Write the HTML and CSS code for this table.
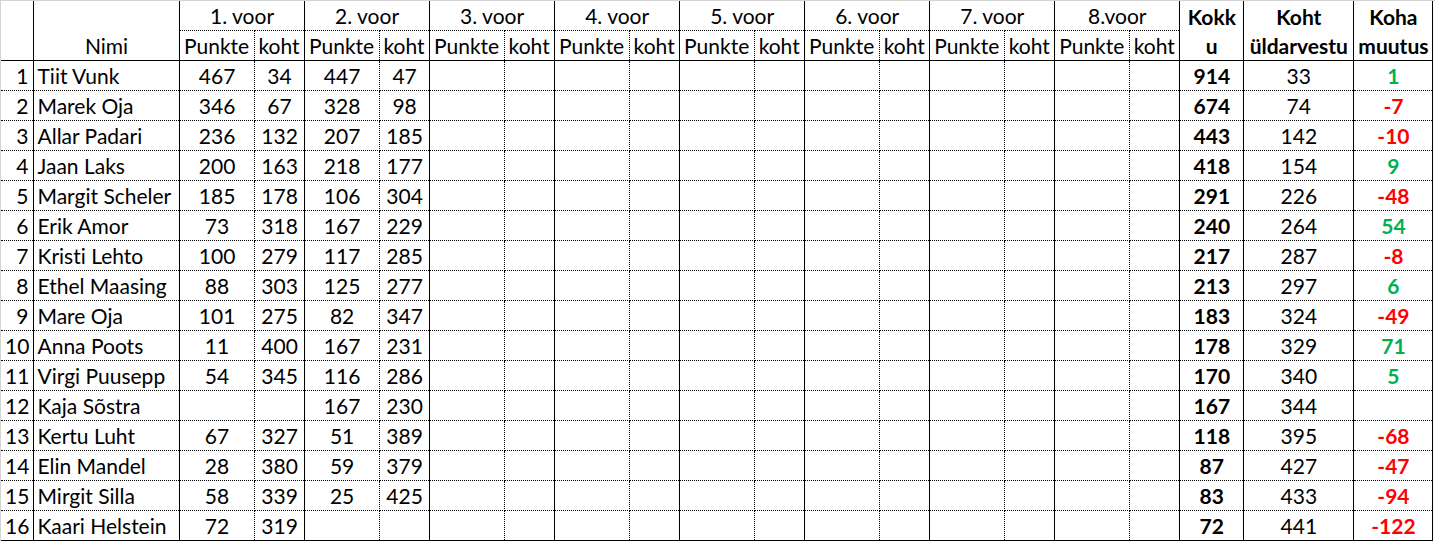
FILE: index.html
```html
<!DOCTYPE html>
<html lang="et">
<head>
<meta charset="utf-8">
<title>Tulemused</title>
<link rel="stylesheet" href="styles.css">
</head>
<body>
<div class="sheet">
<table class="results">
<colgroup>
<col class="c-nr"><col class="c-name">
<col class="c-p"><col class="c-k"><col class="c-p"><col class="c-k">
<col class="c-p"><col class="c-k"><col class="c-p"><col class="c-k">
<col class="c-p"><col class="c-k"><col class="c-p"><col class="c-k">
<col class="c-p"><col class="c-k"><col class="c-p"><col class="c-k">
<col class="c-sum"><col class="c-place"><col class="c-diff">
</colgroup>
<thead>
<tr class="top">
<th class="nr hb" rowspan="2"></th>
<th class="name hb" rowspan="2">Nimi</th>
<th class="voor" colspan="2">1. voor</th>
<th class="voor" colspan="2">2. voor</th>
<th class="voor" colspan="2">3. voor</th>
<th class="voor" colspan="2">4. voor</th>
<th class="voor" colspan="2">5. voor</th>
<th class="voor" colspan="2">6. voor</th>
<th class="voor" colspan="2">7. voor</th>
<th class="voor" colspan="2">8.voor</th>
<th class="bold hb" rowspan="2">Kokk<br>u</th>
<th class="bold hb" rowspan="2">Koht<br>üldarvestu</th>
<th class="bold hb" rowspan="2">Koha<br>muutus</th>
</tr>
<tr>
<th class="p hb">Punkte</th><th class="k hb">koht</th>
<th class="p hb">Punkte</th><th class="k hb">koht</th>
<th class="p hb">Punkte</th><th class="k hb">koht</th>
<th class="p hb">Punkte</th><th class="k hb">koht</th>
<th class="p hb">Punkte</th><th class="k hb">koht</th>
<th class="p hb">Punkte</th><th class="k hb">koht</th>
<th class="p hb">Punkte</th><th class="k hb">koht</th>
<th class="p hb">Punkte</th><th class="k hb">koht</th>
</tr>
</thead>
<tbody id="rows"></tbody>
</table>
</div>
<script src="app.js"></script>
</body>
</html>
```
FILE: app.js
```js
const data = [
  [1, "Tiit Vunk", 467, 34, 447, 47, 914, 33, 1],
  [2, "Marek Oja", 346, 67, 328, 98, 674, 74, -7],
  [3, "Allar Padari", 236, 132, 207, 185, 443, 142, -10],
  [4, "Jaan Laks", 200, 163, 218, 177, 418, 154, 9],
  [5, "Margit Scheler", 185, 178, 106, 304, 291, 226, -48],
  [6, "Erik Amor", 73, 318, 167, 229, 240, 264, 54],
  [7, "Kristi Lehto", 100, 279, 117, 285, 217, 287, -8],
  [8, "Ethel Maasing", 88, 303, 125, 277, 213, 297, 6],
  [9, "Mare Oja", 101, 275, 82, 347, 183, 324, -49],
  [10, "Anna Poots", 11, 400, 167, 231, 178, 329, 71],
  [11, "Virgi Puusepp", 54, 345, 116, 286, 170, 340, 5],
  [12, "Kaja Sõstra", "", "", 167, 230, 167, 344, ""],
  [13, "Kertu Luht", 67, 327, 51, 389, 118, 395, -68],
  [14, "Elin Mandel", 28, 380, 59, 379, 87, 427, -47],
  [15, "Mirgit Silla", 58, 339, 25, 425, 83, 433, -94],
  [16, "Kaari Helstein", 72, 319, "", "", 72, 441, -122]
];

const tbody = document.getElementById("rows");
data.forEach((r) => {
  const tr = document.createElement("tr");
  const cells = [];
  cells.push(`<td class="nr">${r[0]}</td>`);
  cells.push(`<td class="name">${r[1]}</td>`);
  const rounds = [[r[2], r[3]], [r[4], r[5]]];
  for (let i = 0; i < 8; i++) {
    const pr = rounds[i] || ["", ""];
    cells.push(`<td class="p">${pr[0]}</td>`);
    cells.push(`<td class="k">${pr[1]}</td>`);
  }
  cells.push(`<td class="sum">${r[6]}</td>`);
  cells.push(`<td class="place">${r[7]}</td>`);
  let cls = "diff";
  if (r[8] !== "") cls += r[8] > 0 ? " up" : " down";
  cells.push(`<td class="${cls}">${r[8]}</td>`);
  tr.innerHTML = cells.join("");
  tbody.appendChild(tr);
});
```
FILE: styles.css
```css
html, body {
  margin: 0;
  padding: 0;
  background: #ffffff;
}

.sheet {
  border-top: 1px solid #d4d4d4;
  border-left: 1px solid #d4d4d4;
  width: 1434px;
}

.results {
  border-collapse: collapse;
  table-layout: fixed;
  width: 1432px;
  font-family: "Lato", "Carlito", "Liberation Sans", sans-serif;
  font-size: 21px;
  font-variant-ligatures: none;
  color: #000;
}

.c-nr { width: 32px; }
.c-name { width: 146px; }
.c-p { width: 75px; }
.c-k { width: 50px; }
.c-sum { width: 64px; }
.c-place { width: 110px; }
.c-diff { width: 79px; }

.results tr { height: 30px; }
.results tr.top { height: 29px; }

.results th,
.results td {
  padding: 0 3px 0 4px;
  line-height: 29px;
  vertical-align: bottom;
  white-space: nowrap;
  overflow: hidden;
  text-align: center;
  font-weight: 400;
  border-bottom: 1px dotted #000;
  border-right: 1px solid #000;
}

.results th.voor { border-bottom: 1px dotted #000; }
.results th.hb { border-bottom: 1px solid #000; }
.results .p { border-right: 1px dotted #000; }
.results .bold { font-weight: 700; }

.results th.p, .results th.k { padding: 0; }

.results td.nr { text-align: right; padding-right: 4px; }
.results td.name { text-align: left; }
.results td.sum { font-weight: 700; }
.results td.diff { font-weight: 700; }
.results td.up { color: #00b050; }
.results td.down { color: #ff0000; }

.results tbody tr:last-child td { border-bottom: 1px solid #000; }
```
